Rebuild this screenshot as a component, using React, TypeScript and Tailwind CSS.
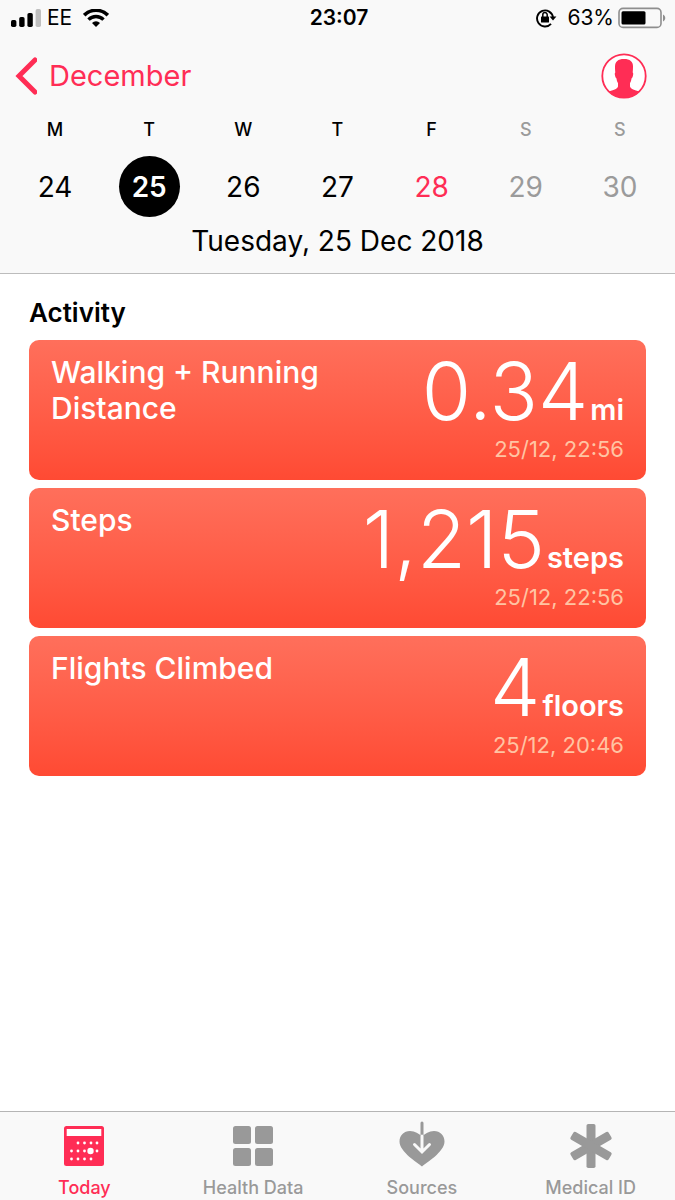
import type { ReactNode } from 'react';

type Day = { letter: string; date: number; muted?: boolean; accent?: boolean; selected?: boolean };

const days: Day[] = [
  { letter: 'M', date: 24 },
  { letter: 'T', date: 25, selected: true },
  { letter: 'W', date: 26 },
  { letter: 'T', date: 27 },
  { letter: 'F', date: 28, accent: true },
  { letter: 'S', date: 29, muted: true },
  { letter: 'S', date: 30, muted: true },
];

const metrics = [
  { title: 'Walking + Running Distance', value: '0.34', unit: 'mi', time: '25/12, 22:56' },
  { title: 'Steps', value: '1,215', unit: 'steps', time: '25/12, 22:56' },
  { title: 'Flights Climbed', value: '4', unit: 'floors', time: '25/12, 20:46' },
];

function StatusBar() {
  return (
    <div className="grid h-9 grid-cols-3 items-center pr-2 pl-[11px] text-[21px] leading-6 text-black">
      <div className="flex items-center gap-[5px]">
        <svg width="31" height="18" viewBox="0 0 31 18" aria-hidden="true">
          <rect x="0" y="11" width="5.400" height="7" rx="1.700" />
          <rect x="8.200" y="8" width="5.400" height="10" rx="1.700" />
          <rect x="16.400" y="4" width="5.400" height="14" rx="1.700" />
          <rect x="24.600" y="0" width="5.400" height="18" rx="1.700" fill="#bfbfbf" />
        </svg>
        <span>EE</span>
        <svg className="ml-[6px]" width="26" height="18" viewBox="0 0 26 18" fill="none" stroke="#000" aria-hidden="true">
          <path d="M1.200 6.200a16.700 16.700 0 0 1 23.600 0" strokeWidth="3.600" />
          <path d="M5.500 10.600a10.600 10.600 0 0 1 15 0" strokeWidth="3.400" />
          <path d="M13 18l-4-4a5.700 5.700 0 0 1 8 0z" fill="#000" stroke="none" />
        </svg>
      </div>
      <div className="text-center font-semibold">23:07</div>
      <div className="flex items-center justify-end gap-1">
        <svg className="mr-[5px]" width="22" height="20" viewBox="0 0 22 20" fill="none" stroke="#000" aria-hidden="true">
          <path d="M15 15.800A8 8 0 1 1 17 9.500" strokeWidth="1.900" />
          <path d="M13.600 8.600h6.800L17 12.600z" fill="#000" stroke="none" />
          <rect x="5" y="8.600" width="8" height="6" rx=".6" fill="#000" stroke="none" />
          <path d="M6.800 9V6.800a2.200 2.200 0 0 1 4.400 0V9" strokeWidth="1.500" />
        </svg>
        <span>63%</span>
        <svg width="49" height="22" viewBox="0 0 49 22" aria-hidden="true">
          <rect x="1" y="1.400" width="42" height="19" rx="4" fill="none" stroke="#8e8e8e" strokeWidth="1.600" />
          <rect x="3.500" y="4.200" width="24" height="13.400" rx="1.500" />
          <path d="M45 7.400c3 1.500 3 5.500 0 7z" fill="#8e8e8e" />
        </svg>
      </div>
    </div>
  );
}

function Header() {
  return (
    <header className="border-b border-[#bcbcbc] bg-[#f9f9f9]">
      <StatusBar />
      <div className="flex h-20 items-center justify-between pr-7 pl-[15px]">
        <button type="button" className="flex items-center gap-3 text-[29px] leading-9 text-[#ff2d55]">
          <svg width="22" height="38" viewBox="0 0 22 38" fill="none" stroke="currentColor" strokeWidth="5" strokeLinecap="round" strokeLinejoin="miter" aria-hidden="true">
            <path d="M20 3L4 19l16 16" />
          </svg>
          December
        </button>
        <button type="button" aria-label="Profile" className="text-[#ff2d55]">
          <svg width="46" height="46" viewBox="0 0 46 46" aria-hidden="true">
            <circle cx="23" cy="23" r="21.700" fill="#fff" stroke="currentColor" strokeWidth="1.800" />
            <path
              d="M23 6c-6 0-9 2.500-9 7.500 0 2.500.1 4 .3 6-.7.300-.6 1.700-.3 3.100.3 1.500.9 2.600 1.500 2.800.3 2 .8 3.500 1.500 4.700v3.400c-1 2.800-4.500 3.500-9.500 5A22 22 0 0 0 23 45a22 22 0 0 0 15.500-6.500c-5-1.500-8.500-2.200-9.500-5v-3.400c.7-1.200 1.200-2.700 1.500-4.700.6-.2 1.200-1.300 1.500-2.800.3-1.400.4-2.800-.3-3.100.2-2 .3-3.500.3-6 0-5-3-7.500-9-7.500z"
              fill="currentColor"
            />
          </svg>
        </button>
      </div>
      <div className="grid grid-cols-7 px-2">
        {days.map((day, index) => (
          <div key={index} className={`flex flex-col items-center ${day.muted ? 'text-[#9b9b9b]' : 'text-black'}`}>
            <span className="text-lg leading-7 font-medium">{day.letter}</span>
            <button
              type="button"
              className={`mt-3 flex size-[61px] items-center justify-center rounded-full text-[28px] leading-8 ${
                day.selected ? 'bg-black font-semibold text-white' : ''
              } ${day.accent ? 'text-[#ff2d55]' : ''}`}
            >
              {day.date}
            </button>
          </div>
        ))}
      </div>
      <p className="pt-[6px] pb-[14px] text-center text-[28px] leading-9 text-black">Tuesday, 25 Dec 2018</p>
    </header>
  );
}

function MetricCard({ title, value, unit, time }: (typeof metrics)[number]) {
  return (
    <li>
      <button
        type="button"
        className="flex h-[140px] w-full items-start justify-between rounded-[10px] bg-linear-to-b from-[#ff6f5b] to-[#ff4a33] px-[22px] pt-[14px] text-left text-white"
      >
        <span className="w-72 text-3xl leading-9 font-medium">{title}</span>
        <span className="flex flex-col items-end">
          <span className="flex items-baseline">
            <span className="text-[80px] leading-[74px] font-light">{value}</span>
            <span className="ml-[2px] text-[29px] leading-9 font-semibold">{unit}</span>
          </span>
          <span className="mt-[5px] text-[22px] leading-8 text-[#ffc4a3]">{time}</span>
        </span>
      </button>
    </li>
  );
}

function Tab({ label, active, children }: { label: string; active?: boolean; children: ReactNode }) {
  return (
    <a
      href="#"
      aria-current={active ? 'page' : undefined}
      className={`flex flex-1 flex-col items-center pt-2 ${active ? 'text-[#ff2d55]' : 'text-[#999]'}`}
    >
      <svg width="48" height="52" viewBox="0 0 48 52" fill="currentColor" aria-hidden="true">
        {children}
      </svg>
      <span className="mt-1 text-lg leading-6 font-medium">{label}</span>
    </a>
  );
}

const calendarDots = [
  [18, 23], [24.5, 23], [31, 23], [37, 23],
  [11.5, 31], [18, 31], [24.5, 31], [37, 31],
  [11.5, 39], [18, 39], [24.5, 39], [31, 39],
];

function TabBar() {
  return (
    <nav className="flex h-[89px] border-t border-[#b5b5b5] bg-[#f9f9f9]">
      <Tab label="Today" active>
        <rect x="4" y="6" width="40" height="40" rx="2.500" />
        <rect x="6.700" y="9" width="34.600" height="7" fill="#fff" />
        {calendarDots.map(([x, y]) => (
          <circle key={`${x}-${y}`} cx={x} cy={y} r="1.400" fill="#fff" />
        ))}
        <circle cx="30.500" cy="31" r="3.200" fill="#fff" />
      </Tab>
      <Tab label="Health Data">
        <rect x="4" y="6" width="18" height="18" rx="2.500" />
        <rect x="26" y="6" width="18" height="18" rx="2.500" />
        <rect x="4" y="28" width="18" height="18" rx="2.500" />
        <rect x="26" y="28" width="18" height="18" rx="2.500" />
      </Tab>
      <Tab label="Sources">
        <path d="M24 46.500C20 43 1.500 32 1.500 21.500c0-6 4.500-10.500 10.500-10.500 5 0 9 2.500 12 5.500 3-3 7-5.500 12-5.500 6 0 10.500 4.500 10.500 10.500C46.500 32 28 43 24 46.500z" />
        <path d="M24 3v13" fill="none" stroke="currentColor" strokeWidth="3" strokeLinecap="round" />
        <path d="M24 16v15M16.500 24.500l7.500 7.500 7.500-7.500" fill="none" stroke="#f9f9f9" strokeWidth="3" strokeLinecap="round" />
      </Tab>
      <Tab label="Medical ID">
        <rect x="19.500" y="4" width="9" height="44" rx="1.800" />
        <rect x="19.500" y="4" width="9" height="44" rx="1.800" transform="rotate(60 24 26)" />
        <rect x="19.500" y="4" width="9" height="44" rx="1.800" transform="rotate(-60 24 26)" />
      </Tab>
    </nav>
  );
}

export default function App() {
  return (
    <div className="flex min-h-screen flex-col bg-white font-['Inter','Liberation_Sans',sans-serif]">
      <Header />
      <main className="flex-1 px-[29px] pt-[21px]">
        <h1 className="text-[26px] leading-9 font-semibold text-black">Activity</h1>
        <ul className="mt-[9px] flex flex-col gap-2">
          {metrics.map((metric) => (
            <MetricCard key={metric.title} {...metric} />
          ))}
        </ul>
      </main>
      <TabBar />
    </div>
  );
}
